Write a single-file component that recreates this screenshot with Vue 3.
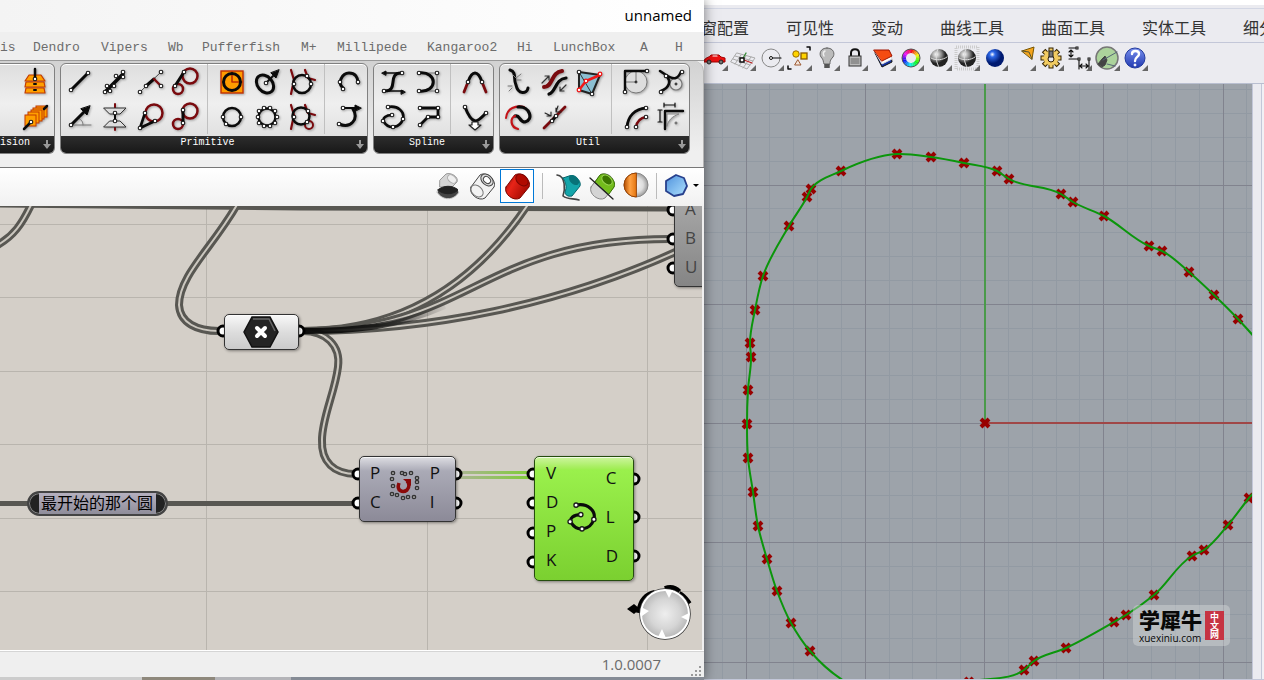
<script setup>
const n = (x, y) => `<circle cx="${x}" cy="${y}" r="1.8" fill="#fff" stroke="#1a1a1a" stroke-width="1.1"/>`
const p = (d, w = 3, c = '#0a0a0a', f = 'none') =>
  `<path d="${d}" fill="${f}" stroke="${c}" stroke-width="${w}" stroke-linecap="round" stroke-linejoin="round"/>`
const c = (x, y, r, w = 2.5, s = '#0a0a0a', f = 'none') =>
  `<circle cx="${x}" cy="${y}" r="${r}" fill="${f}" stroke="${s}" stroke-width="${w}"/>`
const red = '#7a0a0e'
const grey = '#777'
const nodes = (...list) => list.map(([x, y]) => n(x, y)).join('')

const tiers =
  p('M7 22H25L26 27H6Z', 1.2, '#c33a00', '#ffa000') +
  p('M7 16H25L26 21H6Z', 1.2, '#c33a00', '#ffa000') +
  p('M10 9H22L26 15H6Z', 1.2, '#c33a00', '#ffa000') +
  p('M15 18H17M15 24H17', 2) + p('M16 3V13', 2.5) + n(16, 13)
const stack =
  [[17, 5], [14, 7], [12, 9], [9, 11], [6, 14]].map(([x, y]) => `<rect x="${x}" y="${y}" width="11" height="11" fill="#ffa000" stroke="#c33a00"/>`).join('') +
  p('M5 28L12 21M25 8L28 5', 2.5) + n(12, 21)

const ring = Array.from({ length: 10 }, (_, i) => {
  const a = (i / 10) * Math.PI * 2
  return n(Math.round(16 + 9.5 * Math.cos(a)), Math.round(16 + 9.5 * Math.sin(a)))
}).join('')

const spiral = p('M11 6C21 4 28 11 26 18C23 27 12 29 7 21C5 17 9 14 15 14', 2.6) + nodes([11, 6], [15, 14], [26, 18], [16, 26], [6, 20])

const groups = [
  { name: 'ision', cut: true, sets: [[['Tiers', tiers], ['Stack', stack]]] },
  {
    name: 'Primitive',
    sets: [
      [
        ['Line', p('M7 24L24 7') + nodes([7, 24], [24, 7])],
        ['Fit line', p('M7 25L24 8', 3.6) + nodes([6, 26], [11, 25], [8, 20], [15, 20], [17, 10], [24, 6], [24, 11])],
        ['Line 4pt', p('M6 26L27 6', 1, '#444') + p('M12 20L20 13') + p('M20 13L27 20', 2.4, red) + nodes([6, 26], [12, 20], [27, 6], [27, 20])],
        ['Tangent in', c(21, 10, 7.5, 2.5, red) + c(9, 23, 5, 2.5, red) + p('M6 20L15 6') + nodes([6, 20], [15, 6])],
        ['Line SDL', p('M7 24H27', 1, grey) + p('M14 17C18 19 19 21 19 24', 1, grey) + p('M7 24L20 11') + p('M26 5L23 14L17 8Z', 1, '#0a0a0a', '#0a0a0a') + n(7, 24)],
        ['Two planes', p('M16 3V29', 2, red) + p('M5 7H27L21 13H11Z', 1, '#333', '#ddd') + p('M5 26H27L21 20H11Z', 1, '#333', '#ddd') + p('M16 12V20', 2) + nodes([16, 12], [16, 20])],
        ['Tangent', c(20, 12, 8.5, 2.5, red) + p('M21 20L6 27L11 12', 2.6) + nodes([6, 27], [11, 12], [21, 20])],
        ['Tangent ex', c(21, 10, 7.5, 2.5, red) + c(9, 23, 5, 2.5, red) + p('M14 9V22') + nodes([14, 9], [14, 22])]
      ],
      [
        ['Circle', '<rect x="5" y="5" width="22" height="22" fill="#ff9c00" stroke="#c03000" stroke-width="1.4"/>' + p('M16 6V16H26', 1.6, '#c03000') + c(16, 16, 8.5, 3)],
        ['Circle CNR', '<ellipse cx="14" cy="18" rx="7.5" ry="10" transform="rotate(-40 14 18)" fill="none" stroke="#0a0a0a" stroke-width="3"/>' + p('M15 17L24 8', 1.8) + p('M28 4L25 12L20 7Z', 1, '#0a0a0a', '#0a0a0a') + n(15, 17)],
        ['Circle TanTan', p('M5 4L8 14L5 28M19 4L22 12L29 14', 2.2, red) + c(16, 18, 9) + nodes([8, 18], [21, 10], [25, 18])],
        ['Circle 3pt', c(16, 16, 9) + nodes([7, 16], [25, 16], [10, 23])],
        ['Circle fit', c(16, 16, 8.5) + ring],
        ['Circle TTT', p('M5 4L8 14L5 28M19 4L22 12L29 14', 2.2, red) + c(23, 24, 4, 2, red) + c(15, 15, 8.5) + nodes([8, 16], [22, 10], [21, 21])]
      ],
      [
        ['Arc', p('M10 22C4 17 9 7 16 7C22 7 25 11 25 17') + nodes([10, 23], [7, 16], [25, 16])],
        ['Arc SED', p('M10 7H24', 2) + p('M28 7L22 4V10Z', 1, '#0a0a0a', '#0a0a0a') + p('M20 8C26 18 18 28 6 23') + nodes([10, 7], [6, 23])]
      ]
    ]
  },
  {
    name: 'Spline',
    sets: [
      [
        ['Bezier', p('M25 7H7M7 25H26', 1.4) + p('M25 7C9 6 23 26 7 25') + p('M5 7L9 5V9ZM28 26L24 24V28Z', 1, '#0a0a0a', '#0a0a0a') + nodes([25, 7], [7, 25])],
        ['Nurbs', p('M7 7H25V25H7', 1, grey) + p('M7 7C26 5 26 27 7 25') + nodes([7, 7], [25, 7], [25, 25], [7, 25])],
        ['Interpolate', spiral],
        ['Polyline', p('M8 7H26V16H16L8 24', 2.8) + nodes([8, 7], [26, 7], [26, 16], [16, 16], [8, 24])]
      ],
      [
        ['Sub curve', p('M5 26L9 16M27 26L23 16', 2.8, red) + p('M9 16C13 4 19 4 23 16') + nodes([9, 16], [23, 16])],
        ['Curve on surface', p('M6 6C9 14 12 19 16 20C20 20 23 16 27 12') + p('M13 21H19V24H22L16 29L10 24H13Z', 1.2, '#222', '#fff') + nodes([6, 6], [27, 12])]
      ]
    ]
  },
  {
    name: 'Util',
    sets: [
      [
        ['Explode', p('M7 4C14 6 10 13 13 19C15 29 24 28 25 22') + p('M10 9L13 12L18 8M14 14H18M9 20H5M9 22L6 25', 1, '#777')],
        ['Flip', p('M6 21C15 21 13 6 24 5', 4, red) + p('M11 28C18 26 17 13 28 12', 3.2) + p('M4 17L11 10M7 10H11V14M28 19L22 25M22 21V25H26', 1.2, '#333')],
        ['Mesh edges', p('M6 6L27 9L19 28L6 24Z', 2, '#222', '#8bbfd2') + p('M6 6L19 28M13 15L27 9', 1, '#333') + p('M6 24L13 15L27 9', 2.6, '#f01818') + [[6, 24], [27, 8], [13, 15]].map(([x, y]) => c(x, y, 1.8, 1.3, '#f01818', '#fff')).join('') + nodes([6, 6], [19, 28])],
        ['Fair curve', p('M3 17C4 7 13 4 21 6', 2, '#c41318') + p('M15 6C27 5 31 19 22 21C16 21 17 13 12 15', 3.2) + p('M12 15C7 17 7 26 15 28', 2.2, '#c41318')],
        ['Join', p('M6 27L27 6', 2.8, red) + p('M7 12L13 15M13 11V15H9M20 5L18 11M23 11L18 11V7', 1.1, '#222') + p('M14 20L18 15') + nodes([14, 20], [18, 15])]
      ],
      [
        ['Fillet', c(16, 16, 11, 1, grey, '#ddd') + p('M5 16H16V5', 1, grey) + p('M5 26V5H27', 2.4) + c(16, 16, 1, 1) + nodes([5, 26], [27, 5])],
        ['Fillet distance', c(21, 18, 6, 1.2, grey, '#ddd') + p('M5 5L11 9C20 15 23 12 26 6M11 10C17 15 14 22 6 25', 2.6) + c(21, 18, 1, 1) + nodes([11, 10], [27, 6], [6, 26])],
        ['Offset', p('M7 26C8 15 15 8 26 7', 2.8) + p('M16 26C17 20 20 17 26 16', 2.4, red) + nodes([7, 26], [26, 7], [16, 26], [26, 16])],
        ['Offset loose', p('M9 4H20M9 2V6M20 2V6M5 9V21M3 9H7M3 21H7', 1.2) + p('M12 25V13H24C18 15 13 19 12 25', 1, '#888', '#eee') + p('M10 28V10H28', 2.4) + c(21, 22, 1, 1, '#555')]
      ]
    ]
  }
]

const tabs = ['is', 'Dendro', 'Vipers', 'Wb', 'Pufferfish', 'M+', 'Millipede', 'Kangaroo2', 'Hi', 'LunchBox', 'A', 'H']

const tube = (fill, dark, hole) =>
  p('M5 17L14 5C20 1 31 10 28 17L19 28C13 32 2 24 5 17Z', 1, dark, fill) +
  `<ellipse cx="21" cy="10" rx="7" ry="5" transform="rotate(42 21 10)" fill="${hole}" stroke="${dark}"/>`
const display = [
  ['No preview', p('M8 10L14 4C19 2 27 7 25 12L20 17H8Z', 1, '#999', '#d5d5d5') + '<ellipse cx="20" cy="9" rx="5" ry="3.5" transform="rotate(40 20 9)" fill="#eee" stroke="#aaa"/>' + p('M5 22C10 15 22 15 27 22C22 31 10 31 5 22Z', 1, '#ccc', '#444') + p('M6 20C11 15 21 15 26 20C21 25 11 25 6 20Z', 1, '#222', '#222')],
  ['Wireframe', tube('#f2f2f2', '#444', '#ddd') + '<ellipse cx="11" cy="21" rx="7" ry="5" transform="rotate(42 11 21)" fill="none" stroke="#777"/><ellipse cx="21" cy="10" rx="4" ry="3" transform="rotate(42 21 10)" fill="#fff" stroke="#444"/>'],
  ['Shaded', tube('url(#redTube)', '#7c0500', '#b00a00')]
]
const preview = [
  ['Selected only', p('M5 5C14 6 13 20 11 26C16 30 22 28 27 30', 1.6, '#444') + p('M11 8L17 6C21 4 30 10 28 16L20 26C16 27 13 25 13 22C15 17 14 13 11 8Z', 1, '#04656b', '#14a5aa') + '<ellipse cx="22" cy="10" rx="6" ry="4" transform="rotate(45 22 10)" fill="#087278"/>'],
  ['Clip', tube('#d4d4d4', '#888', '#4b8800') + p('M9 12L14 5C20 1 31 10 28 17L23 24Z', 1, '#397700', '#73bc1c') + '<ellipse cx="21" cy="10" rx="6" ry="4" transform="rotate(42 21 10)" fill="#3c7600" stroke="#9ad552"/>' + p('M4 8L27 29', 1.3, '#222')],
  ['Quality', c(16, 15, 12, 1, '#888', 'url(#whiteHalf)') + p('M16 3A12 12 0 0 0 16 27Z', 1, '#9b4200', 'url(#orangeHalf)')]
]
const hex = p('M16 5L24 8L27 16L23 24L14 26L6 21L6 11Z', 1.8, '#27408d', 'url(#skyHex)')

const menus = ['窗配置', '可见性', '变动', '曲线工具', '曲面工具', '实体工具', '细分工具']
const ball = id => `<circle cx="14" cy="14" r="9" fill="url(#${id})"/>`
const rhino = [
  ['Car', p('M3 17C4 13 8 14 10 11H18L20 13L24 14V18H3Z', 1, '#a50000', '#ee1111') + p('M12 12H16', 1.2, '#fff') + c(8, 18, 2, 1, '#222', '#777') + c(20, 18, 2, 1, '#222', '#777')],
  ['Plane', p('M8 9L26 14L18 25L2 18ZM12 11L6 20M17 12L10 22M22 13L14 24M6 12L24 17M4 15L21 21', 1, '#aaa') + p('M13 16L17 9', 1.3, '#338833') + p('M15 16L23 19', 1.3, '#bb2222') + '<rect x="11" y="14" width="4" height="4" fill="#fff" stroke="#111" stroke-width="1.5"/>'],
  ['Circle view', c(14, 14, 9, 1, '#888') + p('M14 14H24', 1.2) + c(14, 14, 1.5, 1, '#111', '#fff')],
  ['Select', c(11, 10, 3.2, 1, '#9a6a00', '#ffd400') + '<rect x="16" y="9" width="6" height="6" fill="#ffd400" stroke="#8a5b00" stroke-width="1.3"/>' + p('M13 16L16 21H10Z', 1, '#9b5830', '#f5e6dc') + p('M22 3H25V6M3 22V25H6', 1.5)],
  ['Bulb', p('M14 4C7 4 6 10 8 13C11 16 10 18 11 20H17C17 18 17 16 20 13C22 10 21 4 14 4Z', 1, '#666', '#bbb') + p('M12 21H16M12 23H16', 2, '#555') + p('M12 7C10 8 10 10 11 12', 1.5, '#eee')],
  ['Lock', p('M10 13V9C10 4 18 4 18 9V13', 2, '#111') + '<rect x="8" y="12" width="12" height="10" fill="#bbb" stroke="#333"/>' + p('M10 15H18M10 17H18M10 19H18', 1, '#666')],
  ['Layers', p('M6 9L13 23L23 18L22 11Z', 1, '#111', '#1633a0') + p('M6 8L13 20L23 15L22 10Z', 1, '#ddd', '#fff') + p('M5 6L20 6L23 12L13 17Z', 1, '#a01500', '#f54c12')],
  ['Colours', ''],
  ['Sphere', ball('greyBall') + p('M6 14C11 17 18 16 22 13M13 5C10 11 11 18 14 23', 1, '#ddd')],
  ['Render', '<rect x="3" y="3" width="22" height="22" fill="none" stroke="#ccc" stroke-width="3" stroke-dasharray="1 1"/>' + ball('greyBall') + p('M6 14C11 17 18 16 22 13M13 5C10 11 11 18 14 23', 1, '#ddd')],
  ['Blue ball', ball('blueBall')],
  ['Spotlight', p('M13 7L25 3L23 15Z', 1, '#775500', '#f5a51c') + p('M13 7L20 8L23 15', 1, '#553')],
  ['Options', Array.from({ length: 8 }, (_, i) => `<rect x="12" y="4" width="4" height="5" fill="#f2cc62" stroke="#332200" transform="rotate(${i * 45} 14 14)"/>`).join('') + c(14, 14, 7, 1, '#f2cc62', '#f2cc62') + c(14, 15, 3, 1, '#332200', '#e8e8ee') + '<rect x="12" y="7" width="4" height="6" fill="#777" stroke="#222"/>'],
  ['Dimension', p('M4 4H11M4 15H14M14 15V25M24 15V25M6 6V13M4 8L6 6L8 8M4 11L6 13L8 11M16 22H22M17 20L15 22L17 24M21 20L23 22L21 24', 1.1) + '<rect x="11" y="3" width="2" height="2" fill="#fff" stroke="#111"/><rect x="13" y="14" width="2" height="2" fill="#fff" stroke="#111"/><rect x="23" y="14" width="2" height="2" fill="#fff" stroke="#111"/>'],
  ['Grasshopper', c(14, 14, 11, 1.5, '#777', '#acd39c') + p('M5 20L9 15L12 12L14 16L12 21L9 23Z', 1, '#444', '#444') + p('M10 16L24 8M14 20L22 22', 1, '#567')],
  ['Help', c(14, 14, 10, 1, '#223a9d', 'url(#helpBall)') + p('M11 10C11 6 18 6 18 10C18 13 14 13 14 17', 2.4, '#fff') + c(14, 21, 1, 1, '#fff', '#fff')]
]
const wheel = Array.from({ length: 24 }, (_, i) => {
  const a = (i * 15 * Math.PI) / 180
  const b = ((i + 1.1) * 15 * Math.PI) / 180
  return { d: `M${14 + 7 * Math.sin(a)} ${14 - 7 * Math.cos(a)}A7 7 0 0 1 ${14 + 7 * Math.sin(b)} ${14 - 7 * Math.cos(b)}`, color: `hsl(${i * 15} 90% 52%)` }
})
rhino[7][1] = wheel.map(w => `<path d="${w.d}" fill="none" stroke="${w.color}" stroke-width="4"/>`).join('') + c(14, 14, 9, 1, '#555')

const wires = [
  'M32 203C22 224 14 236 -4 246',
  'M238 203C214 246 179 275 179 305C180 323 197 331 219 331',
  'M303 331C390 331 468 295 529 203',
  'M303 331C470 331 480 239 670 239',
  'M303 331C430 331 560 305 680 250',
  'M303 331C325 331 341 345 338 367C335 392 322 418 322 440C321 462 334 474 356 474'
]
const ports = [[223, 331], [299, 331], [358, 474], [358, 503], [456, 474], [456, 503], [533, 474], [533, 503], [533, 533], [533, 562], [634, 479], [634, 517], [634, 556], [673, 210], [673, 239], [673, 268]]
const dots = [[12, 4], [21, 4], [24, 5], [30, 4], [11, 10], [36, 9], [36, 13], [12, 17], [36, 19], [11, 25], [16, 26], [22, 29], [27, 28], [33, 28]]

const pts = [
  [810, 651], [791, 623], [777, 591], [767, 559], [758, 526], [753, 492], [748, 458], [747, 424], [748, 390], [751, 357], [750, 343], [755, 310],
  [763, 276], [789, 226], [807, 197], [811, 189], [841, 171], [897, 154], [931, 157], [964, 163], [997, 171], [1009, 179], [1061, 194],
  [1073, 202], [1104, 216], [1149, 246], [1162, 251], [1189, 272], [1214, 295], [1238, 319], [1275, 365], [1296, 430], [1275, 468],
  [1249, 498], [1228, 525], [1204, 550], [1192, 556], [1154, 595], [1126, 615], [1114, 622], [1066, 648], [1034, 661], [1024, 670], [969, 682], [915, 700], [855, 687]
]
const marks = [...pts.filter(([x, y]) => x < 1260 && y < 685), [985, 423]]
const sub = (u, v) => [u[0] - v[0], u[1] - v[1]]
const tangent = (a, b, e) => {
  const [u, v] = [sub(b, a), sub(e, b)]
  const [l, m] = [Math.hypot(...u), Math.hypot(...v)]
  return [0, 1].map(k => ((u[k] / l) * m + (v[k] / m) * l) / (l + m))
}
const curve = (() => {
  const m = pts.length
  let d = `M${pts[0]}`
  for (let i = 0; i < m; i++) {
    const [a, b, e, f] = [pts[(i + m - 1) % m], pts[i], pts[(i + 1) % m], pts[(i + 2) % m]]
    const len = Math.hypot(...sub(e, b)) / 3
    const [t, s] = [tangent(a, b, e), tangent(b, e, f)]
    d += `C${b[0] + t[0] * len} ${b[1] + t[1] * len} ${e[0] - s[0] * len} ${e[1] - s[1] * len} ${e[0]} ${e[1]}`
  }
  return d
})()
const steps = Array.from({ length: 90 }, (_, i) => i - 30)
const at = (origin, k) => Math.floor(origin + k * 23.85) + 0.5
</script>

<template>
  <main class="desk">
    <svg class="defs" width="0" height="0" aria-hidden="true">
      <defs>
        <linearGradient id="redTube" y2=".6"><stop offset="0" stop-color="#8e0600" /><stop offset=".4" stop-color="#e82418" /><stop offset="1" stop-color="#a00800" /></linearGradient>
        <linearGradient id="orangeHalf"><stop offset="0" stop-color="#b24c00" /><stop offset=".5" stop-color="#ffa244" /><stop offset="1" stop-color="#e67812" /></linearGradient>
        <radialGradient id="whiteHalf"><stop offset="0" stop-color="#f4f4f4" /><stop offset=".6" stop-color="#ddd" /><stop offset="1" stop-color="#999" /></radialGradient>
        <linearGradient id="skyHex" x2="1" y2="1"><stop offset="0" stop-color="#4f92dc" /><stop offset="1" stop-color="#b0e2ff" /></linearGradient>
        <radialGradient id="greyBall" cx=".35" cy=".3"><stop offset="0" stop-color="#fff" /><stop offset=".6" stop-color="#888" /><stop offset="1" stop-color="#222" /></radialGradient>
        <radialGradient id="blueBall" cx=".35" cy=".3"><stop offset="0" stop-color="#fff" /><stop offset=".3" stop-color="#2d68e8" /><stop offset="1" stop-color="#001a70" /></radialGradient>
        <linearGradient id="helpBall" x2="0" y2="1"><stop offset="0" stop-color="#7990ee" /><stop offset="1" stop-color="#2038b0" /></linearGradient>
        <radialGradient id="dial"><stop offset="0" stop-color="#eee" /><stop offset=".6" stop-color="#d5d5d5" /><stop offset="1" stop-color="#b4b4b4" /></radialGradient>
        <linearGradient id="greenWire" gradientUnits="userSpaceOnUse" x1="460" x2="530"><stop offset="0" stop-color="#a9b591" /><stop offset="1" stop-color="#7fcc38" /></linearGradient>
        <linearGradient id="bundle" gradientUnits="userSpaceOnUse" x1="303" x2="450"><stop offset="0" stop-color="#0c0c0b" /><stop offset=".5" stop-color="#0c0c0b" stop-opacity=".8" /><stop offset="1" stop-color="#222" stop-opacity="0" /></linearGradient>
      </defs>
    </svg>

    <section class="editor">
      <header class="title">unnamed</header>
      <nav class="tabs">
        <button v-for="t in tabs" :key="t" type="button">{{ t }}</button>
      </nav>
      <div class="ribbon">
        <section v-for="g in groups" :key="g.name" class="group" :class="{ cut: g.cut }">
          <div class="sets">
            <div v-for="(s, i) in g.sets" :key="i" class="set" :style="{ '--cols': Math.ceil(s.length / 2) }">
              <button v-for="[label, art] in s" :key="label" type="button" :aria-label="label">
                <svg width="32" height="32" viewBox="0 0 32 32" v-html="art"></svg>
              </button>
            </div>
          </div>
          <footer>
            <span>{{ g.name }}</span>
            <svg width="12" height="12" viewBox="0 0 12 12"><path d="M6 1V9" stroke="#999" stroke-width="2" /><path d="M2 5H10L6 10Z" fill="#999" /></svg>
          </footer>
        </section>
      </div>

      <div class="tools">
        <button v-for="([label, art], i) in display" :key="label" type="button" :aria-label="label" :class="{ active: i === 2 }"><svg width="32" height="32" viewBox="0 0 32 32" v-html="art"></svg></button>
        <i class="rule"></i>
        <button v-for="[label, art] in preview" :key="label" type="button" :aria-label="label"><svg width="32" height="32" viewBox="0 0 32 32" v-html="art"></svg></button>
        <i class="rule slim"></i>
        <button type="button" aria-label="Mesh settings"><svg width="32" height="32" viewBox="0 0 32 32" v-html="hex"></svg></button>
        <button type="button" class="drop" aria-label="More"><svg width="6" height="4"><path d="M0 0H6L3 3Z" /></svg></button>
      </div>

      <div class="canvas">
        <svg class="layer" width="100%" height="100%">
          <g transform="translate(0 -206)">
            <path d="M206.5 200V660M427.5 200V660M647.5 200V660M0 224.5H704M0 297.5H704M0 371.5H704M0 444.5H704M0 518.5H704M0 591.5H704" stroke="#b9b5ae" />
            <path d="M0 205L300 208L670 209" fill="none" stroke="#585752" stroke-width="5" />
            <path d="M0 503.5H28M167 503.5H355" stroke="#585752" stroke-width="5" />
            <g v-for="w in wires" :key="w" fill="none">
              <path :d="w" stroke="#585752" stroke-width="8" />
              <path :d="w" stroke="#cbc7bf" stroke-width="2" />
            </g>
            <path d="M303 331C350 331 395 328 445 306" fill="none" stroke="url(#bundle)" stroke-width="6" />
            <path d="M460 472.5H530M460 477.5H530" stroke="url(#greenWire)" stroke-width="3" />
            <circle v-for="(q, i) in ports" :key="i" :cx="q[0]" :cy="q[1]" r="5" fill="#fff" stroke="#000" stroke-width="3" />
          </g>
        </svg>

        <article class="node merge"><div class="col"><b>A</b><b>B</b><b>U</b></div></article>
        <article class="node point">
          <svg width="36" height="32" viewBox="0 0 36 32">
            <path d="M9 1H27L35 16L27 31H9L1 16Z" fill="#242424" stroke="#111" stroke-width="1.5" />
            <path d="M10 3H26L32 15" fill="none" stroke="#666" stroke-width="1.5" />
            <path d="M14 12L22 20M22 12L14 20" stroke="#fff" stroke-width="4" stroke-linecap="round" />
          </svg>
        </article>
        <article class="node seam">
          <div class="col"><b>P</b><b>C</b></div>
          <svg width="44" height="40" viewBox="0 0 44 36">
            <g fill="#ddd" stroke="#333" stroke-width="1.5"><circle v-for="(d, i) in dots" :key="i" :cx="d[0]" :cy="d[1]" r="1.6" /></g>
            <path d="M18 14C15 22 22 24 26 21C29 18 28 14 26 12" fill="none" stroke="#8b0a0a" stroke-width="3.5" />
            <path d="M22 10H30V17Z" fill="#8b0a0a" />
          </svg>
          <div class="col"><b>P</b><b>I</b></div>
        </article>
        <article class="node interp">
          <div class="col"><b>V</b><b>D</b><b>P</b><b>K</b></div>
          <svg width="38" height="38" viewBox="0 0 32 32" v-html="spiral"></svg>
          <div class="col"><b>C</b><b>L</b><b>D</b></div>
        </article>
        <article class="pill"><span>最开始的那个圆</span></article>
        <svg class="compass" width="70" height="60" viewBox="0 0 70 60">
          <path d="M0 25L7 20L13 25L7 30Z" />
          <path d="M12 29C14 15 20 11 28 9M38 5C44 3 48 4 52 8M52 10C57 12 59 16 62 20" fill="none" stroke="#000" stroke-width="6" />
          <circle cx="38" cy="30" r="25" fill="url(#dial)" stroke="#333" stroke-width="1.5" />
          <circle cx="38" cy="30" r="24" fill="none" stroke="#fff" stroke-width="2" />
          <path d="M38 6H46L42 14ZM14 23L22 27L15 32ZM62 29V37L54 33ZM31 53L35 45L39 54Z" fill="#fff" />
        </svg>
      </div>

      <footer class="status">
        <span>1.0.0007</span>
        <svg width="12" height="12" viewBox="0 0 12 12" fill="#999"><path d="M9 1H11V3H9ZM5 5H7V7H5ZM9 5H11V7H9ZM1 9H3V11H1ZM5 9H7V11H5ZM9 9H11V11H9Z" /></svg>
      </footer>
      <div class="behind"></div>
    </section>

    <section class="rhino">
      <nav class="menus"><button v-for="m in menus" :key="m" type="button">{{ m }}</button></nav>
      <div class="icons">
        <button v-for="[label, art] in rhino" :key="label" type="button" :aria-label="label">
          <svg width="28" height="28" viewBox="0 0 28 28"><g v-html="art"></g><path d="M27 21V27H21Z" fill="#666" /></svg>
        </button>
      </div>
      <div class="stage">
        <div class="view">
          <svg class="layer" width="100%" height="100%">
            <g transform="translate(-704 -84)">
              <g v-for="k in steps" :key="k" stroke="#929aa3">
                <path v-if="k % 5" :d="`M${at(984.5, k)} 0V3000M600 ${at(423.5, k)}H3000`" />
              </g>
              <g v-for="k in steps" :key="'m' + k" stroke="#81838e">
                <path v-if="k % 5 === 0" :d="`M${at(984.5, k)} 0V3000M600 ${at(423.5, k)}H3000`" />
              </g>
              <path d="M985 0V423" stroke="#4a9a4a" stroke-width="2" />
              <path d="M985 423H3000" stroke="#a04747" stroke-width="2" />
              <path v-for="(q, i) in marks" :key="i" :d="`M${q[0] - 4} ${q[1] - 4}l8 8m0 -8l-8 8`" stroke="#980000" stroke-width="4" />
              <path :d="curve" fill="none" stroke="#0b960b" stroke-width="2" />
            </g>
          </svg>
          <div class="mark">
            <div><strong>学犀牛</strong><span>xuexiniu.com</span></div>
            <em>中文网</em>
          </div>
        </div>
        <aside class="side"></aside>
      </div>
    </section>
  </main>
</template>

<style>
body { margin: 0; overflow: hidden; }
</style>
<style scoped>
* { box-sizing: border-box; }
button { border: 0; padding: 0; background: none; font: inherit; color: inherit; white-space: nowrap; }
svg { display: block; flex: none; }
.defs { position: absolute; }
.desk { display: grid; grid-template-columns: 704px minmax(0, 1fr); height: 100vh; font-family: "Open Sans", "Noto Sans", "Noto Sans CJK SC", sans-serif; background: #ebebf0; }
.editor { position: relative; z-index: 1; display: flex; flex-direction: column; min-height: 0; background: #efefef; box-shadow: 0 0 12px rgba(0, 0, 0, .5); }
.title { height: 32px; padding-right: 12px; text-align: right; font-size: 15px; line-height: 30px; color: #000; background: linear-gradient(90deg, #f4f4f4, #fff); }
.tabs { display: grid; grid-template-columns: 33px 68px 67px 34px 99px 36px 90px 90px 36px 87px 35px 29px; height: 29px; font: 13px/31px "Liberation Mono", monospace; color: #6c6c6c; border-bottom: 1px solid #999; }
.tabs button { text-align: left; }
.ribbon { display: flex; gap: 5px; height: 106px; padding-top: 2px; background: linear-gradient(#d2d2d2, #efefef 90px); border-right: 1px solid #b5b5b5; border-top-right-radius: 10px; }
.group { height: 91px; border: 1px solid #808080; border-radius: 6px; background: linear-gradient(#dedede, #efefef 40px, #d9d9d9); overflow: hidden; box-shadow: inset 0 1px #fff; }
.group.cut { width: 55px; border-left: 0; border-radius: 0 6px 6px 0; }
.sets { display: flex; padding: 0 1px 2px; height: 72px; }
.cut .sets { justify-content: flex-end; padding-right: 2px; }
.set { display: grid; grid-template-columns: repeat(var(--cols), 35px); grid-template-rows: 35px 35px; }
.set + .set { padding-left: 12px; background: linear-gradient(#c0c0c0, #c0c0c0) 5px 0 / 1px 100% no-repeat; }
.set button { display: grid; place-items: center; filter: drop-shadow(1px 1px 1px rgba(0, 0, 0, .3)); }
.group footer { display: flex; align-items: center; height: 18px; padding-right: 1px; background: linear-gradient(#2d2d2d, #171717); color: #fff; font: 10px/14px "Liberation Mono", monospace; }
.group footer span { flex: 1; text-align: center; padding-bottom: 4px; }
.cut footer span { text-align: left; }
.tools { display: flex; align-items: center; justify-content: flex-end; height: 39px; padding: 0 5px 2px 0; background: linear-gradient(#fff, #f1f1f1); border-top: 1px solid #777; }
.tools button { display: grid; place-items: center; width: 34px; height: 34px; }
.tools .active { border: 1px solid #0078d7; background: #fff; margin-left: 1px; }
.tools .drop { width: 6px; }
.rule { width: 1px; height: 26px; margin: 0 8px; background: #bbb; }
.rule.slim { margin: 0 2px 0 3px; }
.canvas { position: relative; flex: 1; min-height: 0; margin-right: 2px; overflow: hidden; background: #d4cfc8; }
.layer { position: absolute; inset: 0; }
.node { position: absolute; display: flex; justify-content: space-between; align-items: stretch; padding: 1px 10px 5px; border: 1px solid #333; border-radius: 5px; font-size: 17px; line-height: 20px; color: #111; box-shadow: 1px 1px 3px rgba(0, 0, 0, .4), inset 0 1px rgba(255, 255, 255, .7); }
.node b { font-weight: 400; }
.node > svg { align-self: center; }
.col { display: flex; flex-direction: column; justify-content: space-around; }
.merge { left: 674px; top: -14px; width: 40px; height: 95px; background: linear-gradient(#aaa, #858585); color: #444; }
.point { left: 224px; top: 108px; width: 75px; height: 36px; padding: 0; justify-content: center; align-items: center; background: linear-gradient(#f8f8f8, #ddd 50%, #cacaca); }
.point svg { margin-right: 2px; }
.seam { left: 359px; top: 250px; width: 97px; height: 66px; background: linear-gradient(#dedee3, #aaaab6 14px, #8c8a98); padding-right: 15px; }
.seam svg { margin: 0 -2px 0 -6px; }
.interp { left: 534px; top: 250px; width: 100px; height: 125px; padding-left: 11px; padding-right: 15px; background: linear-gradient(#cef5a0, #a0ed54 12px, #9af04c 13px, #7bd030); border-color: #254d0e; }
.pill { position: absolute; left: 27px; top: 285px; height: 25px; padding: 0 10px; border: 2px solid #444; border-radius: 13px; background: #222; box-shadow: inset 0 0 0 1px #888; }
.pill span { display: block; height: 21px; padding: 0 3px 0 2px; background: linear-gradient(#b5b0bf, #8f8d9a); font-size: 16px; line-height: 20px; color: #000; white-space: nowrap; }
.compass { position: absolute; right: 5px; bottom: 6px; }
.status { display: flex; align-items: flex-end; justify-content: flex-end; height: 27px; padding-right: 2px; border-top: 1px solid #fff; background: #efefef; color: #6b6b6b; font-size: 15px; line-height: 25px; box-shadow: inset 0 1px #d5d5d5; }
.status span { margin-right: 29px; }
.behind { height: 3px; background: linear-gradient(90deg, #ccc 0 142px, #8e887c 142px 215px, #b4b4b8 215px 291px, #858b95 291px); }
.rhino { display: flex; flex-direction: column; min-width: 0; min-height: 0; border-top: 5px solid #fff; }
.menus { display: flex; gap: 37px; height: 38px; margin-left: -3px; padding-top: 4px; border-bottom: 1px solid #c3c7d8; overflow: hidden; font-size: 16px; line-height: 38px; color: #333; box-shadow: inset 0 3px #ebebf0, inset 0 4px #d3d7e4; }
.icons { display: flex; height: 41px; margin-left: -3px; padding-top: 1px; border-bottom: 1px solid #b9bfd0; }
.icons button { width: 28px; height: 28px; }
.stage { display: flex; flex: 1; min-height: 0; border-bottom: 1px solid #c3c7d8; }
.view { position: relative; flex: 1; overflow: hidden; background: #9da3aa; }
.side { width: 12px; border-left: 1px solid #c3c7d8; background: linear-gradient(90deg, #ebebf0 8px, #c3c7d8 8px 9px, #f1f1f5 9px); }
.mark { position: absolute; right: 22px; bottom: 33px; display: flex; align-items: center; gap: 3px; height: 41px; padding: 0 6px; border-radius: 5px; background: rgba(220, 222, 222, .4); }
.mark div { display: flex; flex-direction: column; color: #080808; }
.mark strong { font: 900 21px/25px "Noto Sans CJK SC", sans-serif; }
.mark span { font-size: 10px; line-height: 13px; }
.mark em { width: 19px; padding: 1px 5px; background: #c63442; color: #fff; font: 700 9px/9px "Noto Sans CJK SC", sans-serif; }
</style>
